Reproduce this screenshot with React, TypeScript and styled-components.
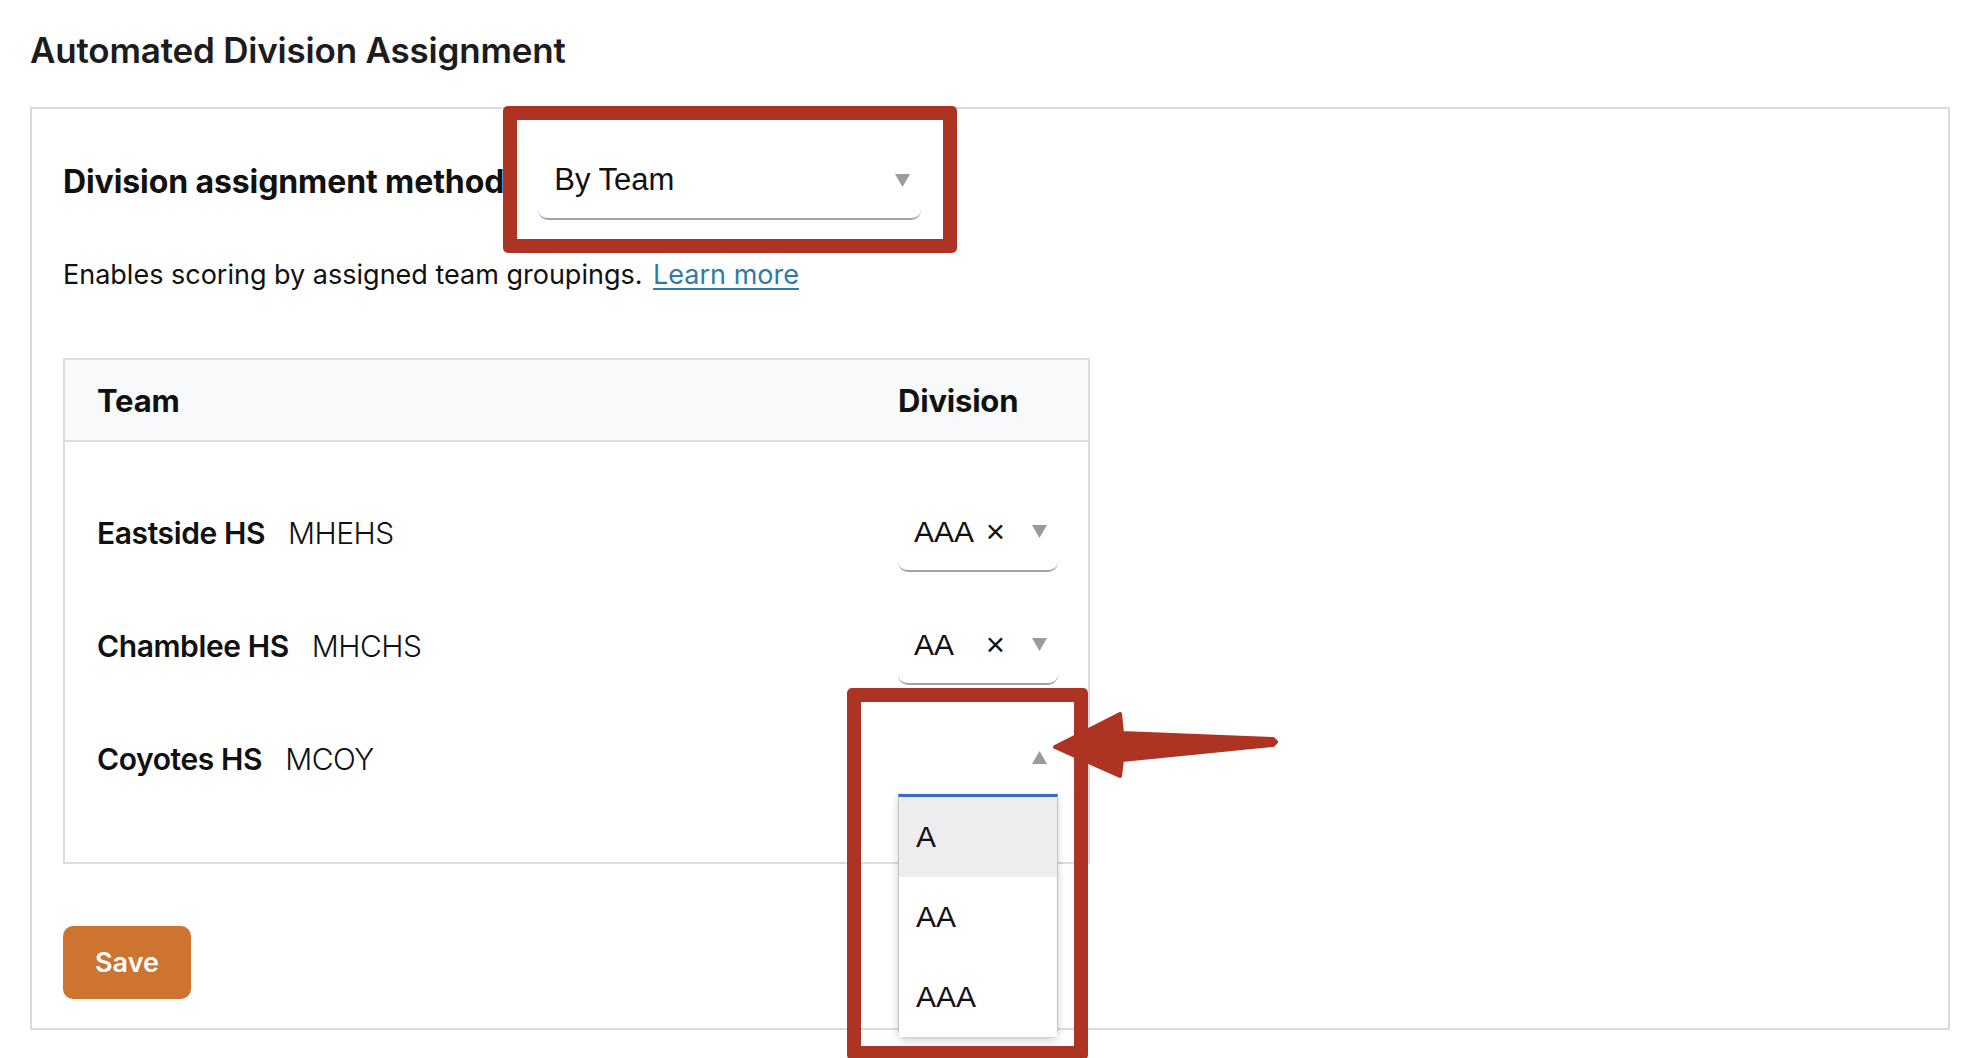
import styled, { createGlobalStyle } from 'styled-components';

const GlobalStyle = createGlobalStyle`
    html, body {
        margin: 0;
        padding: 0;
        background: #fff;
    }
    body {
        font-family: Inter, 'Noto Sans', sans-serif;
        color: #1c1c1e;
    }
`;

const RED = '#ad3422';

const Page = styled.div`
    position: relative;
    height: 1058px;
    overflow: hidden;
    padding: 29px 24px 0 30px;
    box-sizing: border-box;
`;

const Title = styled.h1`
    margin: 0;
    font-size: 35px;
    line-height: 43px;
    font-weight: 600;
    letter-spacing: -0.2px;
    color: #1c1c1e;
`;

const Card = styled.section`
    margin-top: 35px;
    border: 2px solid #dadada;
    padding: 33px 31px 29px 31px;
`;

const MethodRow = styled.div`
    display: flex;
    align-items: center;
    gap: 34px;
`;

const Label = styled.div`
    font-size: 32px;
    font-weight: 700;
    color: #111;
    letter-spacing: -0.1px;
`;

const SelectBox = styled.div<{ $width: number; $open?: boolean }>`
    position: relative;
    width: ${(p) => p.$width}px;
    height: 78px;
    box-sizing: border-box;
    display: flex;
    align-items: center;
    padding: 0 11px 0 16px;
    border-bottom: 2px solid ${(p) => (p.$open ? 'transparent' : '#a2a2a2')};
    border-radius: 0 0 10px 10px;
    font-family: 'Liberation Sans', Arial, sans-serif;
    font-size: 30px;
    color: #111;
`;

const Value = styled.span<{ $size?: number }>`
    flex: 1;
    white-space: nowrap;
    font-size: ${(p) => p.$size ?? 30}px;
`;

const Clear = styled.span`
    font-family: 'Liberation Sans', Arial, sans-serif;
    font-size: 33px;
    margin-right: 27px;
    color: #111;
`;

const Caret = styled.svg`
    width: 15px;
    height: 13px;
    flex: none;
`;

const Description = styled.p`
    margin: 35px 0 0;
    font-size: 27px;
    line-height: 40px;
    color: #111;

    a {
        margin-left: 3px;
        color: #2f7aab;
        text-decoration: underline;
        text-underline-offset: 4px;
    }
`;

const Table = styled.div`
    margin-top: 63px;
    width: 1027px;
    box-sizing: border-box;
    border: 2px solid #dcdcdc;
`;

const HeaderRow = styled.div`
    display: grid;
    grid-template-columns: 1fr 160px;
    align-items: center;
    height: 80px;
    padding: 0 30px 0 32px;
    background: #f8f9fa;
    border-bottom: 2px solid #dcdcdc;
    font-size: 31px;
    font-weight: 700;
    color: #111;
    letter-spacing: -0.2px;
`;

const Body = styled.div`
    padding: 34px 0 47px;
`;

const Row = styled.div`
    display: grid;
    grid-template-columns: 1fr 160px;
    align-items: center;
    height: 113px;
    padding: 0 30px 0 32px;
`;

const TeamName = styled.span`
    font-size: 30px;
    font-weight: 600;
    color: #111;
    letter-spacing: -0.4px;
`;

const TeamCode = styled.span`
    margin-left: 23px;
    font-size: 30px;
    font-weight: 300;
    color: #111;
    letter-spacing: -0.5px;
`;

const Menu = styled.ul`
    position: absolute;
    left: 0;
    top: 74px;
    width: 160px;
    box-sizing: border-box;
    margin: 0;
    padding: 0;
    list-style: none;
    background: #fff;
    border-top: 3px solid #3a6bc6;
    border-left: 1px solid #c2c2c2;
    border-right: 1px solid #c2c2c2;
    border-bottom: 1px solid #d0d0d0;
    border-radius: 0 0 8px 8px;
    box-shadow: 0 3px 8px rgba(0, 0, 0, 0.18);
    z-index: 2;
`;

const Option = styled.li<{ $active?: boolean }>`
    height: 80px;
    display: flex;
    align-items: center;
    padding-left: 17px;
    background: ${(p) => (p.$active ? '#ededed' : '#fff')};
    font-family: 'Liberation Sans', Arial, sans-serif;
    font-size: 30px;
    color: #111;
`;

const SaveButton = styled.button`
    margin-top: 62px;
    width: 128px;
    height: 73px;
    border: none;
    border-radius: 10px;
    background: #cd7431;
    color: #fff;
    font-family: Inter, sans-serif;
    font-size: 27px;
    font-weight: 600;
    cursor: pointer;
`;

const Highlight = styled.div<{ $x: number; $y: number; $w: number; $h: number }>`
    position: absolute;
    left: ${(p) => p.$x}px;
    top: ${(p) => p.$y}px;
    width: ${(p) => p.$w}px;
    height: ${(p) => p.$h}px;
    box-sizing: border-box;
    border: 14px solid ${RED};
    border-radius: 5px;
    pointer-events: none;
    z-index: 3;
`;

const Arrow = styled.svg`
    position: absolute;
    left: 1050px;
    top: 708px;
    width: 230px;
    height: 75px;
    z-index: 4;
`;

const DownCaret = () => (
    <Caret viewBox="0 0 15 13">
        <polygon points="0,0 15,0 7.5,13" fill="#9b9b9b" />
    </Caret>
);

const UpCaret = () => (
    <Caret viewBox="0 0 15 13">
        <polygon points="0,13 15,13 7.5,0" fill="#9b9b9b" />
    </Caret>
);

type Team = { name: string; code: string; division?: string; open?: boolean };

const teams: Team[] = [
    { name: 'Eastside HS', code: 'MHEHS', division: 'AAA' },
    { name: 'Chamblee HS', code: 'MHCHS', division: 'AA' },
    { name: 'Coyotes HS', code: 'MCOY', open: true },
];

const divisions = ['A', 'AA', 'AAA'];

const App = () => {
    return (
        <Page>
            <GlobalStyle />
            <Title>Automated Division Assignment</Title>
            <Card>
                <MethodRow>
                    <Label>Division assignment method</Label>
                    <SelectBox $width={383}>
                        <Value $size={31}>By Team</Value>
                        <DownCaret />
                    </SelectBox>
                </MethodRow>
                <Description>
                    Enables scoring by assigned team groupings. <a href="#">Learn more</a>
                </Description>
                <Table>
                    <HeaderRow>
                        <span>Team</span>
                        <span>Division</span>
                    </HeaderRow>
                    <Body>
                        {teams.map((team) => (
                            <Row key={team.code}>
                                <div>
                                    <TeamName>{team.name}</TeamName>
                                    <TeamCode>{team.code}</TeamCode>
                                </div>
                                <SelectBox $width={160} $open={team.open}>
                                    <Value>{team.division}</Value>
                                    {team.division && <Clear>×</Clear>}
                                    {team.open ? <UpCaret /> : <DownCaret />}
                                    {team.open && (
                                        <Menu>
                                            {divisions.map((d, i) => (
                                                <Option key={d} $active={i === 0}>
                                                    {d}
                                                </Option>
                                            ))}
                                        </Menu>
                                    )}
                                </SelectBox>
                            </Row>
                        ))}
                    </Body>
                </Table>
                <SaveButton>Save</SaveButton>
            </Card>

            <Highlight $x={503} $y={106} $w={454} $h={147} />
            <Highlight $x={847} $y={688} $w={241} $h={372} />
            <Arrow viewBox="0 0 230 75">
                <polygon
                    points="5,39 70,6 72,25 223,31 226,34 223,37 72,52 70,68"
                    fill={RED}
                    stroke={RED}
                    strokeWidth={4}
                    strokeLinejoin="round"
                />
            </Arrow>
        </Page>
    );
};

export default App;
